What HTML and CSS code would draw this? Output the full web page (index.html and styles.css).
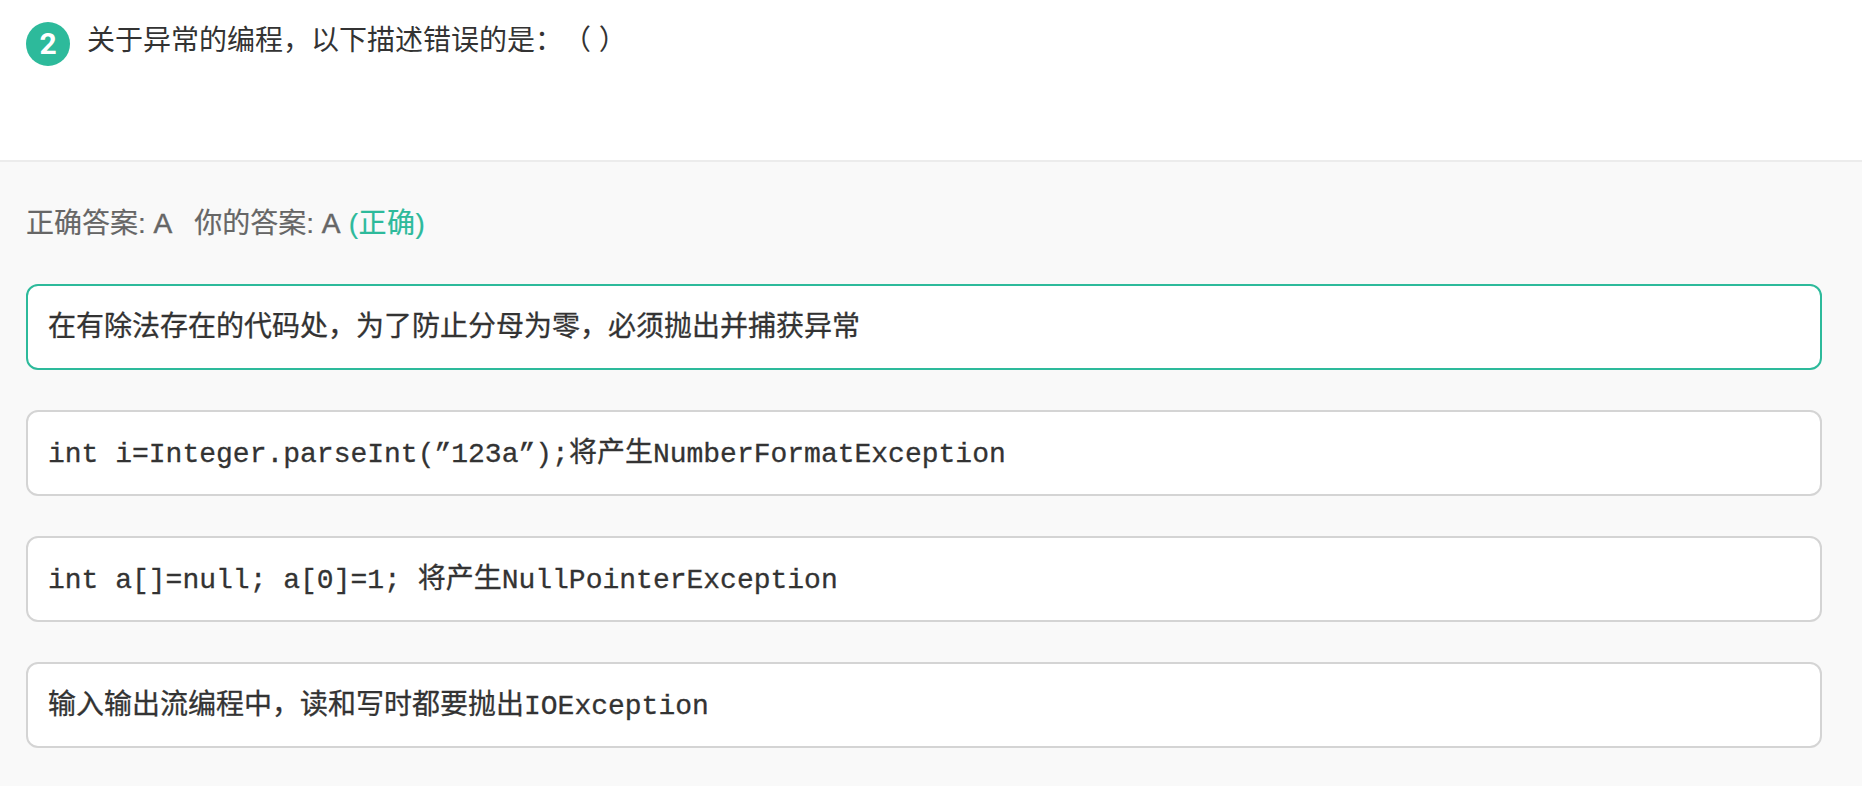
FILE: index.html
```html
<!DOCTYPE html>
<html lang="zh-CN">
<head>
<meta charset="utf-8">
<title>题目</title>
<link rel="stylesheet" href="styles.css">
</head>
<body>
<section class="question">
  <span class="number">2</span>
  <p class="title">关于异常的编程，以下描述错误的是：（ ）</p>
</section>
<section class="answers">
  <p class="result">正确答案: <b class="letter">A</b><span class="yours">你的答案: <b class="letter">A</b></span> <span class="ok">(正确)</span></p>
  <div class="option correct">在有除法存在的代码处，为了防止分母为零，必须抛出并捕获异常</div>
  <div class="option">int i=Integer.parseInt(”123a”);将产生NumberFormatException</div>
  <div class="option">int a[]=null; a[0]=1; 将产生NullPointerException</div>
  <div class="option">输入输出流编程中，读和写时都要抛出IOException</div>
</section>
</body>
</html>
```
FILE: styles.css
```css
html, body {
  margin: 0;
  padding: 0;
  background: #f9f9f9;
}
body {
  height: 786px;
  overflow: hidden;
  font-family: "Liberation Sans", "Noto Sans CJK SC", sans-serif;
  text-spacing-trim: space-all;
}
.question {
  display: flex;
  align-items: flex-start;
  gap: 17px;
  box-sizing: border-box;
  height: 162px;
  padding: 22px 26px 0;
  background: #fff;
  border-bottom: 2px solid #ececec;
}
.number {
  flex: none;
  width: 44px;
  height: 44px;
  border-radius: 50%;
  background: #2dba9b;
  color: #fff;
  font: 700 30px/44px Roboto, "Liberation Sans", sans-serif;
  text-align: center;
}
.title {
  margin: 0;
  font-size: 28px;
  line-height: 38px;
  color: #333;
}
.answers {
  padding: 44px 40px 0 26px;
}
.result {
  margin: 0 0 42px;
  font-size: 28px;
  line-height: 36px;
  color: #666;
  -webkit-text-stroke: 0.2px #666;
}
.letter {
  font-weight: 400;
  font-size: 28px;
  -webkit-text-stroke: 0.5px #666;
}
.yours {
  margin-left: 22px;
}
.ok {
  margin-left: 2px;
  letter-spacing: 0.5px;
  color: #2dba9b;
  -webkit-text-stroke: 0.2px #2dba9b;
}
.option {
  box-sizing: border-box;
  height: 86px;
  margin-bottom: 40px;
  padding: 0 20px;
  background: #fff;
  border: 2px solid #d4d4d4;
  border-radius: 12px;
  font-family: "Liberation Mono", "Noto Sans CJK SC", monospace;
  font-size: 28px;
  line-height: 86px;
  color: #333;
  -webkit-text-stroke: 0.3px #333;
}
.option.correct {
  border-color: #2dba9b;
}
```
